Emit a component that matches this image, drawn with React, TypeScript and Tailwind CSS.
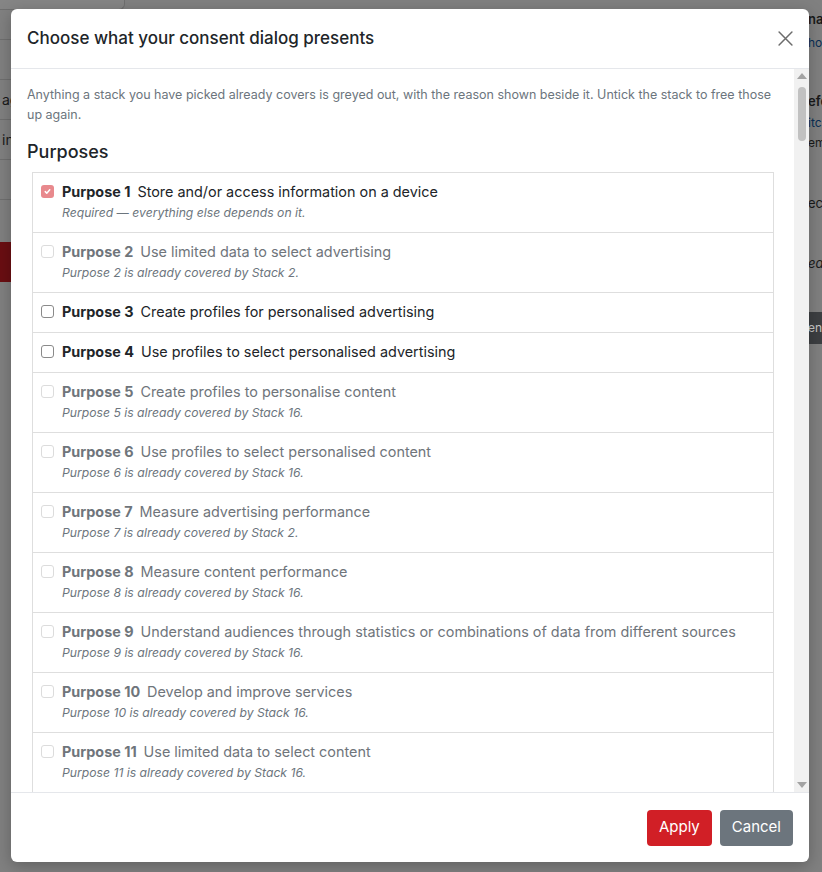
interface Purpose {
    id: number;
    name: string;
    note?: string;
    checked?: boolean;
    disabled?: boolean;
}

const purposes: Purpose[] = [
    { id: 1, name: 'Store and/or access information on a device', note: 'Required — everything else depends on it.', checked: true, disabled: true },
    { id: 2, name: 'Use limited data to select advertising', note: 'Purpose 2 is already covered by Stack 2.', disabled: true },
    { id: 3, name: 'Create profiles for personalised advertising' },
    { id: 4, name: 'Use profiles to select personalised advertising' },
    { id: 5, name: 'Create profiles to personalise content', note: 'Purpose 5 is already covered by Stack 16.', disabled: true },
    { id: 6, name: 'Use profiles to select personalised content', note: 'Purpose 6 is already covered by Stack 16.', disabled: true },
    { id: 7, name: 'Measure advertising performance', note: 'Purpose 7 is already covered by Stack 2.', disabled: true },
    { id: 8, name: 'Measure content performance', note: 'Purpose 8 is already covered by Stack 16.', disabled: true },
    { id: 9, name: 'Understand audiences through statistics or combinations of data from different sources', note: 'Purpose 9 is already covered by Stack 16.', disabled: true },
    { id: 10, name: 'Develop and improve services', note: 'Purpose 10 is already covered by Stack 16.', disabled: true },
    { id: 11, name: 'Use limited data to select content', note: 'Purpose 11 is already covered by Stack 16.', disabled: true },
];

const Checkbox = ({ checked, disabled }: { checked?: boolean; disabled?: boolean }) => {
    if (checked) {
        return (
            <span className="mt-[5px] flex h-[13px] w-[13px] shrink-0 items-center justify-center rounded-[3px] bg-[#e8898d]">
                <svg viewBox="0 0 12 12" className="h-[9px] w-[9px]" fill="none" stroke="white" strokeWidth="2" strokeLinecap="round" strokeLinejoin="round">
                    <path d="M3 6.2l2 2 4-4.4" />
                </svg>
            </span>
        );
    }
    return (
        <span
            className={
                disabled
                    ? 'mt-[5px] h-[13px] w-[13px] shrink-0 rounded-[3px] border border-[#dcdcdc] bg-white'
                    : 'mt-[5px] h-[13px] w-[13px] shrink-0 rounded-[3px] border border-[#8a8a8a] bg-white'
            }
        />
    );
};

const Row = ({ p }: { p: Purpose }) => {
    const muted = p.disabled && !p.checked;
    return (
        <div className="flex gap-[8px] border-b border-[#dedede] px-[8px] pb-[9px] pt-[7px] last:border-b-0">
            <Checkbox checked={p.checked} disabled={p.disabled} />
            <div className="min-w-0">
                <div className={muted ? 'text-[14.4px] leading-[23px] text-[#6f757b]' : 'text-[14.4px] leading-[23px] text-[#212529]'}>
                    <span className="mr-[7px] font-bold">Purpose {p.id}</span>
                    {p.name}
                </div>
                {p.note && (
                    <div className="text-[12.2px] leading-[20px] italic text-[#6c757d]">{p.note}</div>
                )}
            </div>
        </div>
    );
};

const App = () => {
    return (
        <div className="relative h-[872px] w-[822px] overflow-hidden bg-[#808080] font-['Inter',sans-serif]">
            {/* dimmed page behind the dialog */}
            <div className="flex h-full">
                <div className="flex w-[125px] flex-col">
                    <div className="h-[10px] rounded-br-[6px] border-b border-r border-[#6f6f6f] bg-[#858585]" />
                    <div className="h-[30px] border-b border-[#6f6f6f]" />
                    <div className="h-[40px] border-b border-[#6f6f6f]" />
                    <div className="flex h-[40px] items-center border-b border-[#6f6f6f] pl-[2px] text-[14px] text-[#1a1a1a]">ag</div>
                    <div className="flex h-[40px] items-center border-b border-[#6f6f6f] pl-[2px] text-[14px] text-[#1a1a1a]">in</div>
                    <div className="h-[40px] border-b border-[#6f6f6f]" />
                    <div className="h-[42px]" />
                    <div className="h-[40px] bg-[#6a0e12]" />
                </div>
                <div className="flex-1" />
                <div className="flex w-[14px] flex-col overflow-hidden whitespace-nowrap pt-[10px] text-[13px] text-[#1a1a1a]">
                    <div className="h-[24px] font-semibold">na</div>
                    <div className="h-[58px] text-[12px] text-[#0a2e55]">ho</div>
                    <div className="h-[22px] font-semibold">efo</div>
                    <div className="h-[20px] text-[12px] text-[#0a2e55]">itc</div>
                    <div className="h-[60px] text-[12px]">em</div>
                    <div className="h-[60px]">ec</div>
                    <div className="h-[58px] italic">ea</div>
                    <div className="flex h-[32px] items-center bg-[#3d3f42] text-[12px] text-[#c8c8c8]">en</div>
                </div>
            </div>

            {/* dialog */}
            <div className="absolute left-[11px] top-[9px] flex h-[853px] w-[798px] flex-col rounded-[6px] bg-white shadow-[0_4px_16px_rgba(0,0,0,0.25)]">
                <div className="flex h-[60px] shrink-0 items-center justify-between border-b border-[#e5e7eb] pl-[16px] pr-[16px]">
                    <h5 className="text-[17px] font-medium text-[#212529]">Choose what your consent dialog presents</h5>
                    <svg viewBox="0 0 14 14" className="h-[15px] w-[15px]" fill="none" stroke="#6c6c6c" strokeWidth="1.4" strokeLinecap="round">
                        <path d="M1 1L13 13M13 1L1 13" />
                    </svg>
                </div>

                <div className="flex min-h-0 flex-1">
                    <div className="min-w-0 flex-1 overflow-hidden pl-[16px] pr-[16px] pt-[16px]">
                        <p className="text-[12.5px] leading-[20px] text-[#6c757d]">
                            Anything a stack you have picked already covers is greyed out, with the reason shown beside it. Untick the stack to free those up again.
                        </p>
                        <h4 className="mt-[15px] text-[18px] font-medium leading-[24px] text-[#212529]">Purposes</h4>
                        <div className="ml-[5px] mr-[4px] mt-[8px] border border-[#dedede]">
                            {purposes.map((p) => (
                                <Row key={p.id} p={p} />
                            ))}
                        </div>
                    </div>
                    {/* scrollbar */}
                    <div className="flex w-[15px] shrink-0 flex-col items-center bg-[#f1f1f1] py-[4px]">
                        <svg viewBox="0 0 10 6" className="h-[6px] w-[10px]">
                            <path d="M5 0L10 6H0z" fill="#a3a3a3" />
                        </svg>
                        <div className="mt-[8px] h-[54px] w-[8px] rounded-full bg-[#c1c1c1]" />
                        <div className="flex-1" />
                        <svg viewBox="0 0 10 6" className="h-[6px] w-[10px]">
                            <path d="M0 0H10L5 6z" fill="#a3a3a3" />
                        </svg>
                    </div>
                </div>

                <div className="flex h-[70px] shrink-0 items-center justify-end gap-[8px] border-t border-[#e5e7eb] pr-[16px]">
                    <button className="h-[36px] rounded-[4px] bg-[#d11f26] px-[12px] text-[15px] text-white">Apply</button>
                    <button className="h-[36px] rounded-[4px] bg-[#6c757d] px-[12px] text-[15px] text-white">Cancel</button>
                </div>
            </div>
        </div>
    );
};

export default App;
